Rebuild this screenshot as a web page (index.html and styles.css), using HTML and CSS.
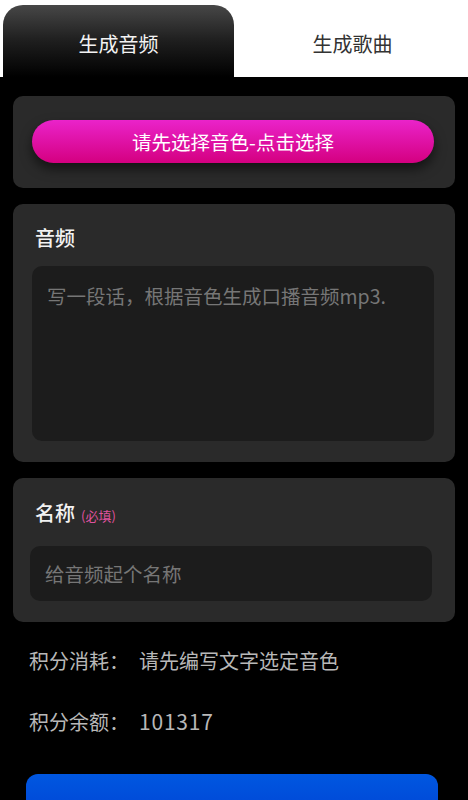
FILE: index.html
```html
<!DOCTYPE html>
<html lang="zh-CN">
<head>
<meta charset="utf-8">
<meta name="viewport" content="width=device-width, initial-scale=1">
<title>生成音频</title>
<link rel="stylesheet" href="styles.css">
</head>
<body>
<div class="tabs">
  <div class="tab tab-active">生成音频</div>
  <div class="tab">生成歌曲</div>
</div>
<main class="main">
  <section class="card card-voice">
    <button class="pick-btn" type="button">请先选择音色-点击选择</button>
  </section>
  <section class="card card-audio">
    <div class="label">音频</div>
    <textarea class="textarea" placeholder="写一段话，根据音色生成口播音频mp3."></textarea>
  </section>
  <section class="card card-name">
    <div class="label">名称<span class="required">(必填)</span></div>
    <input class="input" type="text" placeholder="给音频起个名称">
  </section>
  <div class="stats">
    <div class="stat"><span class="stat-key">积分消耗：</span><span class="stat-val">请先编写文字选定音色</span></div>
    <div class="stat"><span class="stat-key">积分余额：</span><span class="stat-val stat-num">101317</span></div>
  </div>
  <button class="submit-btn" type="button" aria-label="立即生成"></button>
</main>
</body>
</html>
```

FILE: styles.css
```css
* { box-sizing: border-box; }
html, body {
  margin: 0;
  padding: 0;
  background: #000;
  font-family: "Noto Sans CJK SC", "Microsoft YaHei", sans-serif;
  color: #fff;
}
body { width: 468px; height: 800px; overflow: hidden; }

.tabs {
  display: flex;
  height: 77px;
  background: #fff;
  padding-left: 3px;
  align-items: flex-end;
}
.tab {
  flex: 1;
  height: 72px;
  display: flex;
  align-items: center;
  justify-content: center;
  font-size: 20px;
  color: #333;
  padding-top: 4px;
  padding-left: 3px;
}
.tab-active {
  flex: 0 0 231px;
  color: #f2f2f2;
  padding-left: 0;
  border-radius: 20px 20px 0 0;
  background: linear-gradient(to bottom, #474747 0%, #1e1e1e 50%, #000 100%);
}

.main {
  padding: 19px 13px 0;
}
.card {
  background: #2a2a2a;
  border-radius: 10px;
  margin-bottom: 16px;
}
.card-voice {
  padding: 24px 21px 25px 19px;
}
.pick-btn {
  display: block;
  width: 100%;
  height: 43px;
  border: 0;
  border-radius: 22px;
  background: linear-gradient(to bottom, #ea23ca 0%, #d40080 100%);
  color: #fff;
  font-family: inherit;
  font-size: 19.5px;
  box-shadow: 0 6px 12px rgba(0, 0, 0, 0.55);
  padding: 0;
}

.card-audio {
  padding: 20px 21px 21px 19px;
}
.label {
  height: 28px;
  font-size: 20px;
  line-height: 28px;
  font-weight: 500;
  color: #f2f2f2;
  padding-left: 3px;
  white-space: nowrap;
}
.required {
  font-size: 13px;
  line-height: 1;
  color: #e0529f;
  margin-left: 6px;
  font-weight: 400;
}
.textarea {
  display: block;
  width: 100%;
  height: 175px;
  margin-top: 14px;
  border: 0;
  border-radius: 10px;
  background: #1c1c1c;
  color: #ddd;
  font-family: inherit;
  font-size: 19.5px;
  line-height: 28px;
  padding: 16px 15px;
  resize: none;
  outline: none;
}
.textarea::placeholder, .input::placeholder { color: #767676; }

.card-name {
  padding: 21px 23px 21px 17px;
}
.card-name .label { padding-left: 5px; }
.input {
  display: block;
  width: 100%;
  height: 55px;
  margin-top: 19px;
  border: 0;
  border-radius: 10px;
  background: #1c1c1c;
  color: #ddd;
  font-family: inherit;
  font-size: 19.5px;
  padding: 0 15px;
  outline: none;
}

.stats {
  padding: 0 16px;
  margin-top: -7px;
}
.stat {
  height: 60px;
  line-height: 60px;
  font-size: 20px;
  color: #b8b8b8;
  white-space: nowrap;
}
.stat-val { margin-left: 10px; }
.stat-num { letter-spacing: 0.8px; font-size: 21px; }

.submit-btn {
  display: block;
  width: calc(100% - 30px);
  margin: 23px 0 0 13px;
  height: 56px;
  border: 0;
  border-radius: 12px;
  background: linear-gradient(to bottom, #0057e0 0%, #0040d2 100%);
}
```
